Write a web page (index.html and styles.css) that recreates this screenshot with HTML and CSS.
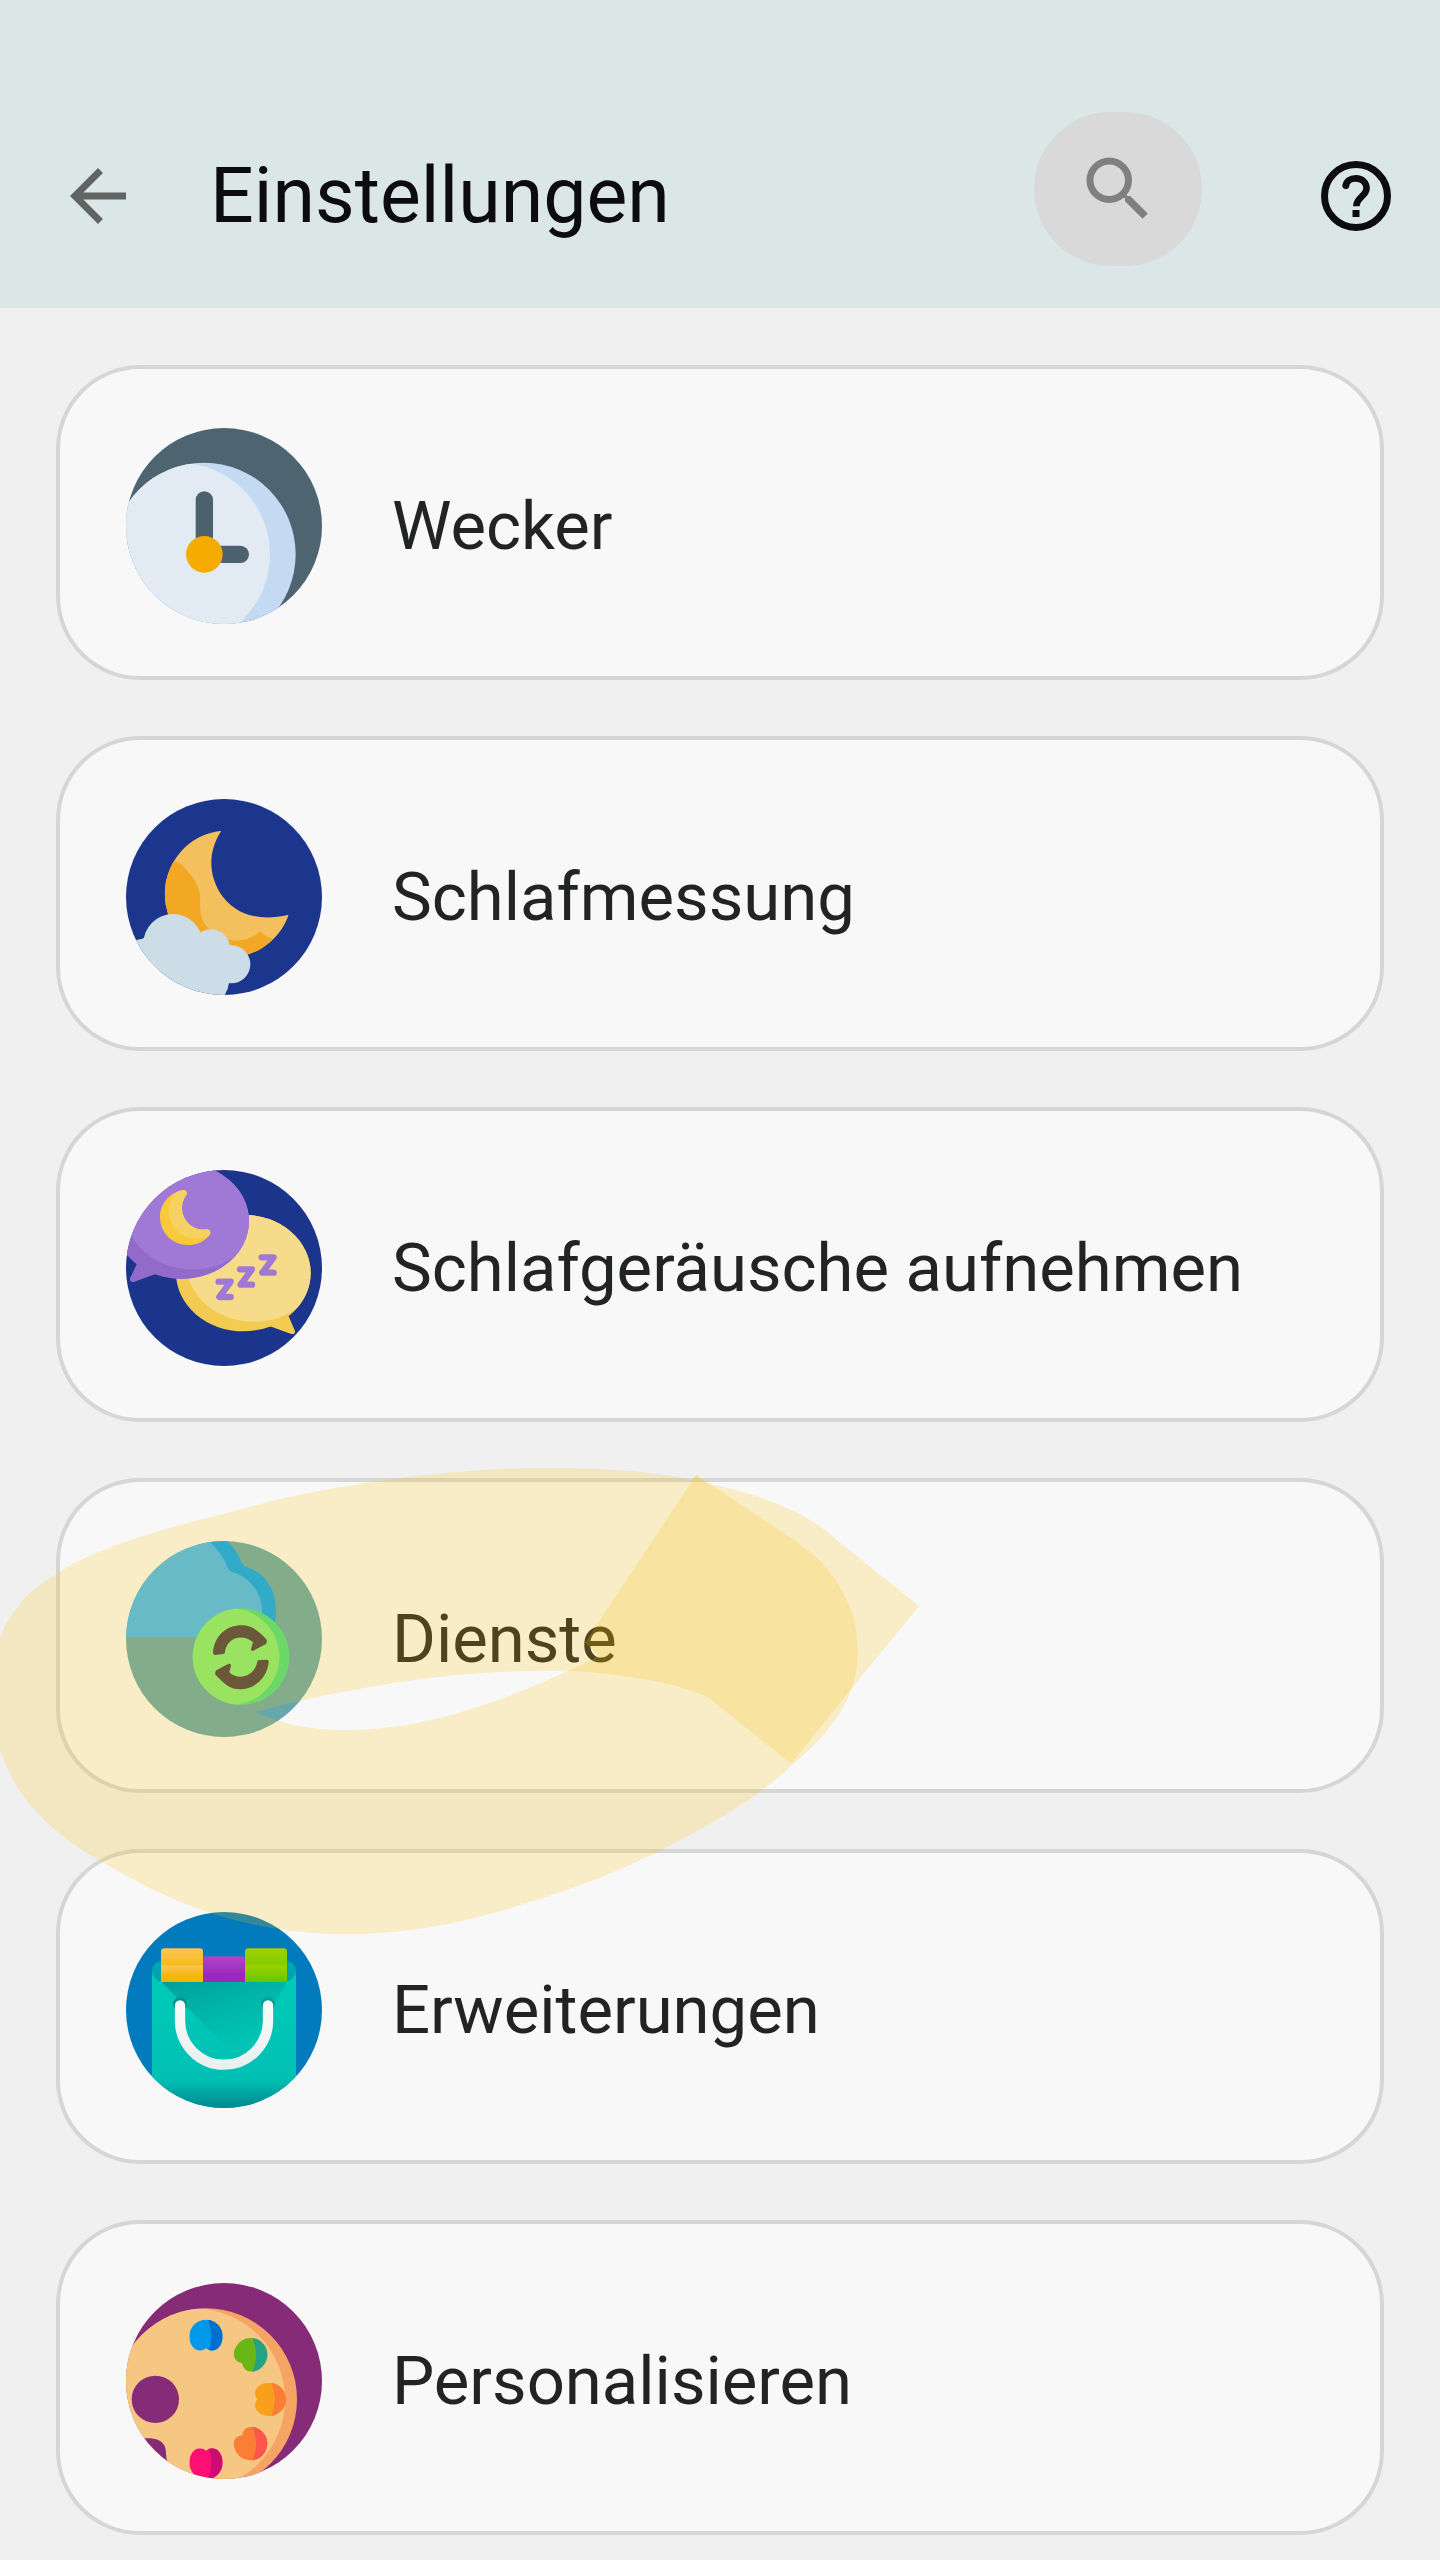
FILE: index.html
```
<!DOCTYPE html>
<html lang="de">
<head>
<meta charset="utf-8">
<meta name="viewport" content="width=device-width, initial-scale=1">
<title>Einstellungen</title>
<link rel="stylesheet" href="styles.css">
</head>
<body>
<header class="app-bar">
  <button class="icon-button" type="button" aria-label="Zurück">
    <svg class="glyph glyph-back" viewBox="0 0 24 24" aria-hidden="true"><path d="M20 11H7.83l5.59-5.59L12 4l-8 8 8 8 1.41-1.41L7.83 13H20v-2z"/></svg>
  </button>
  <h1 class="app-title">Einstellungen</h1>
  <button class="search-button" type="button" aria-label="Suchen">
    <svg class="glyph glyph-search" viewBox="0 0 24 24" aria-hidden="true"><path d="M15.5 14h-.79l-.28-.27A6.471 6.471 0 0 0 16 9.500 6.500 6.500 0 1 0 9.500 16c1.610 0 3.090-.59 4.230-1.570l.27.28v.79l5 4.990L20.490 19l-4.990-5zm-6 0C7.010 14 5 11.990 5 9.500S7.010 5 9.500 5 14 7.010 14 9.500 11.990 14 9.500 14z"/></svg>
  </button>
  <button class="icon-button" type="button" aria-label="Hilfe">
    <svg class="glyph glyph-help" viewBox="0 0 24 24" aria-hidden="true">
      <circle cx="12" cy="12" r="9" fill="none" stroke="currentColor" stroke-width="2"/>
      <path d="M9.100 9.300C9.100 7.800 10.400 6.950 12 6.950c1.700 0 3 1.150 3 2.850 0 2.300-2.900 2.500-2.900 5.100" fill="none" stroke="currentColor" stroke-width="1.900"/>
      <circle cx="9.100" cy="9.100" r=".95"/>
      <path d="M11 16h2v2h-2z"/>
    </svg>
  </button>
</header>

<main>
  <ul class="settings">
    <li class="setting">
      <a class="card" href="#wecker">
        <svg class="card-icon" viewBox="0 0 588 588" aria-hidden="true">
          <defs><clipPath id="clock-face"><circle cx="234" cy="379" r="275"/></clipPath></defs>
          <rect width="588" height="588" fill="#4e6471"/>
          <g clip-path="url(#clock-face)">
            <rect width="588" height="588" fill="#c4daf3"/>
            <circle cx="157" cy="379" r="275" fill="#e2ebf4"/>
          </g>
          <path d="M235 216V379" stroke="#4c626f" stroke-width="52" stroke-linecap="round"/>
          <path d="M235 379H343" stroke="#4c626f" stroke-width="52" stroke-linecap="round"/>
          <circle cx="235" cy="379" r="55" fill="#f5ab00"/>
        </svg>
        <span class="card-label">Wecker</span>
      </a>
    </li>

    <li class="setting">
      <a class="card" href="#schlafmessung">
        <svg class="card-icon" viewBox="48 56 588 588" aria-hidden="true">
          <defs><clipPath id="moon"><path d="M334 151A191 191 0 1 0 536 403C440 426 370 400 328 334C295 276 295 212 334 151Z"/></clipPath></defs>
          <rect x="48" y="56" width="588" height="588" fill="#1c368e"/>
          <g clip-path="url(#moon)">
            <rect x="140" y="140" width="410" height="410" fill="#f4c05e"/>
            <path d="M140 242H190Q205 243 220 258Q270 310 271 355C268 400 275 430 305 452L358 478Q412 488 450 453Q470 474 492 476L540 480V560H140Z" fill="#f3a825"/>
          </g>
          <g fill="#cddde7">
            <circle cx="189" cy="490" r="89"/>
            <circle cx="303" cy="504" r="57"/>
            <circle cx="364" cy="552" r="57"/>
            <path d="M40 481Q90 480 102 473L280 460L355 500L370 560L357 608Q354 632 340 650H40Z"/>
          </g>
        </svg>
        <span class="card-label">Schlafmessung</span>
      </a>
    </li>

    <li class="setting">
      <a class="card" href="#schlafgeraeusche">
        <svg class="card-icon" viewBox="48 59 588 588" aria-hidden="true">
          <defs>
            <clipPath id="bubble-yellow"><ellipse cx="400" cy="368" rx="202" ry="175"/></clipPath>
            <clipPath id="bubble-purple"><ellipse cx="215" cy="212" rx="202" ry="174"/></clipPath>
            <clipPath id="small-moon"><path d="M222 119Q232 122 231 130C205 165 215 205 245 227C262 238 275 239 292 237Q303 239 301 250C288 272 262 284 233 284A83 83 0 0 1 150 201C150 160 180 124 222 119Z"/></clipPath>
          </defs>
          <rect x="48" y="59" width="588" height="588" fill="#1b348c"/>
          <path d="M470 526L480 528L544 551Q556 553 555 542L536 498L500 500Z" fill="#f4cb51"/>
          <g clip-path="url(#bubble-yellow)">
            <rect x="190" y="190" width="420" height="360" fill="#f4cb51"/>
            <ellipse cx="432" cy="339" rx="203" ry="175" fill="#f6dc8a"/>
          </g>
          <path d="M40 300L80 342L60 384Q58 396 71 395L135 372L160 340L80 270Z" fill="#916aca"/>
          <g clip-path="url(#bubble-purple)">
            <rect x="0" y="30" width="430" height="370" fill="#916aca"/>
            <ellipse cx="248" cy="182" rx="203" ry="175" fill="#9f79d5"/>
          </g>
          <g clip-path="url(#small-moon)">
            <rect x="140" y="110" width="170" height="180" fill="#f8c93b"/>
            <circle cx="260" cy="182" r="84" fill="#f5d161"/>
          </g>
          <g fill="none" stroke="#9f79d5" stroke-width="19" stroke-linecap="round" stroke-linejoin="round">
            <path d="M455 321H491L457 367H491"/>
            <path d="M390 357H426L392 403H426"/>
            <path d="M326 394H362L328 440H362"/>
          </g>
        </svg>
        <span class="card-label">Schlafgeräusche aufnehmen</span>
      </a>
    </li>

    <li class="setting">
      <a class="card" href="#dienste">
        <svg class="card-icon" viewBox="48 62 588 588" aria-hidden="true">
          <defs><clipPath id="sync-disc"><circle cx="393" cy="409" r="145"/></clipPath></defs>
          <rect x="48" y="62" width="588" height="588" fill="#65a7ac"/>
          <path d="M250 62H352Q382 92 397 130Q400 137 412 141C470 160 511 220 494 310V351H400Z" fill="#01a6fa"/>
          <path d="M48 351V62H296Q335 95 354 143Q358 153 370 156C420 173 458 220 456 275V351Z" fill="#44baf7"/>
          <g clip-path="url(#sync-disc)">
            <rect x="240" y="260" width="305" height="300" fill="#48df80"/>
            <circle cx="363" cy="409" r="145" fill="#83ec78"/>
          </g>
          <g fill="#483c46">
            <path d="M316 404Q308 404 309 394C315 345 350 315 395 315C425 315 440 328 468 356Q473 362 468 371L430 391Q422 393 423 385L429 366C405 342 355 345 345 392Q346 400 340 401Z"/>
            <path d="M447 419L470 418Q477 418 476 426C473 470 435 507 390 507C360 507 345 492 317 464Q313 457 319 450L356 430Q363 429 363 436L358 456C380 480 432 472 441 427Q441 420 447 419Z"/>
          </g>
        </svg>
        <span class="card-label">Dienste</span>
      </a>
      <svg class="marker" viewBox="0 1460 940 480" aria-hidden="true">
        <g fill="#fac305" fill-opacity=".2">
          <path fill-rule="evenodd" d="M919 1606L832 1536C815 1520 775 1497 709 1484L696 1475L692 1480C644 1470 594 1468 545 1468C492 1468 440 1473 392 1479C340 1486 290 1496 245 1508C200 1520 158 1530 122 1543C98 1552 78 1560 61 1571C42 1583 26 1594 18 1607C8 1619 2 1630 0 1639V1750C9 1775 18 1792 37 1812C55 1832 78 1849 104 1863C134 1881 168 1898 202 1910C245 1926 297 1934 347 1934C408 1934 467 1922 520 1905C577 1888 628 1868 673 1844C720 1820 762 1794 791 1766C820 1742 841 1718 852 1688ZM255 1712C350 1687 460 1668 568 1671C490 1707 415 1731 345 1730C305 1730 280 1723 255 1712Z"/>
          <path d="M696 1475L796 1541C818 1557 832 1571 843 1593Q855 1614 856 1630L858 1653Q857 1673 852 1688L791 1764L709 1698C680 1683 620 1673 568 1671L592 1660L598 1655L585 1643L599 1621Z"/>
        </g>
      </svg>
    </li>

    <li class="setting">
      <a class="card" href="#erweiterungen">
        <svg class="card-icon" viewBox="48 65 588 588" aria-hidden="true">
          <defs>
            <linearGradient id="bag-front" x1="0" y1="0" x2="0" y2="1"><stop offset="0" stop-color="#00cbb7"/><stop offset=".78" stop-color="#00c0b4"/><stop offset="1" stop-color="#00838d"/></linearGradient>
            <linearGradient id="bag-shadow" x1="0" y1="0" x2=".6" y2="1"><stop offset="0" stop-color="#009f99"/><stop offset="1" stop-color="#00a59e" stop-opacity="0"/></linearGradient>
            <linearGradient id="box-orange" x1="0" y1="0" x2="0" y2="1"><stop offset="0" stop-color="#fac558"/><stop offset=".7" stop-color="#f7b500"/></linearGradient>
            <linearGradient id="box-purple" x1="0" y1="0" x2="0" y2="1"><stop offset="0" stop-color="#ae45cb"/><stop offset="1" stop-color="#9322b3"/></linearGradient>
            <linearGradient id="box-green" x1="0" y1="0" x2="0" y2="1"><stop offset="0" stop-color="#a2d000"/><stop offset="1" stop-color="#62c800"/></linearGradient>
            <linearGradient id="handle" x1="0" y1="0" x2="0" y2="1"><stop offset="0" stop-color="#fafafa"/><stop offset="1" stop-color="#e9f0f0"/></linearGradient>
          </defs>
          <rect x="48" y="65" width="588" height="588" fill="#027abe"/>
          <rect x="126" y="211" width="432" height="110" rx="30" fill="#00a4b0"/>
          <path d="M126 240A35 35 0 0 0 161 275H523A35 35 0 0 0 558 240V660H126Z" fill="url(#bag-front)"/>
          <path d="M154 275H530L440 440L350 470Z" fill="url(#bag-shadow)"/>
          <path d="M153 275V184Q153 174 163 174H269Q279 174 279 184V275Z" fill="url(#box-orange)"/>
          <rect x="153" y="225" width="126" height="50" fill="url(#box-orange)"/>
          <path d="M279 275V208Q279 198 289 198H395Q405 198 405 208V275Z" fill="url(#box-purple)"/>
          <rect x="279" y="249" width="126" height="26" fill="#9b28ba"/>
          <path d="M405 275V184Q405 174 415 174H521Q531 174 531 184V275Z" fill="url(#box-green)"/>
          <rect x="405" y="225" width="126" height="50" fill="url(#box-green)"/>
          <circle cx="210" cy="341" r="21" fill="#00928f"/>
          <circle cx="474" cy="341" r="21" fill="#009f9a"/>
          <path d="M210 345V391A132 132 0 0 0 474 391V345" fill="none" stroke="url(#handle)" stroke-width="31" stroke-linecap="round"/>
        </svg>
        <span class="card-label">Erweiterungen</span>
      </a>
    </li>

    <li class="setting">
      <a class="card" href="#personalisieren">
        <svg class="card-icon" viewBox="48 68 588 588" aria-hidden="true">
          <defs>
            <clipPath id="palette"><circle cx="288" cy="417" r="273"/></clipPath>
            <path id="dab" d="M0-50A50 50 0 0 1 50 0C50 25 35 43 18 43Q8 43 0 36Q-8 43-18 43C-35 43-50 25-50 0A50 50 0 0 1 0-50Z"/>
            <clipPath id="dab-down"><use href="#dab"/></clipPath>
            <clipPath id="dab-down-left"><use href="#dab" transform="rotate(45)"/></clipPath>
            <clipPath id="dab-left"><use href="#dab" transform="rotate(90)"/></clipPath>
            <clipPath id="dab-up-left"><use href="#dab" transform="rotate(135)"/></clipPath>
            <clipPath id="dab-up"><use href="#dab" transform="rotate(180)"/></clipPath>
            <path id="dab-shade" d="M2-60Q30 0 2 60H60V-60Z"/>
          </defs>
          <rect x="48" y="68" width="588" height="588" fill="#862b78"/>
          <g clip-path="url(#palette)">
            <rect x="15" y="140" width="550" height="550" fill="#f6a464"/>
            <circle cx="252" cy="417" r="273" fill="#f6c683"/>
          </g>
          <circle cx="136" cy="417" r="71" fill="#862b78"/>
          <path d="M40 534H120Q168 536 168 580Q168 596 173 604L175 660H40Z" fill="#862b78"/>
          <g transform="translate(288 228)" clip-path="url(#dab-down)"><rect x="-60" y="-60" width="120" height="120" fill="#0298ea"/><use href="#dab-shade" fill="#006fce"/></g>
          <g transform="translate(422 283)" clip-path="url(#dab-down-left)"><rect x="-60" y="-60" width="120" height="120" fill="#69b616"/><use href="#dab-shade" fill="#25a184"/></g>
          <g transform="translate(478 417)" clip-path="url(#dab-left)"><rect x="-60" y="-60" width="120" height="120" fill="#f8a01b"/><use href="#dab-shade" fill="#fb7d36"/></g>
          <g transform="translate(422 550)" clip-path="url(#dab-up-left)"><rect x="-60" y="-60" width="120" height="120" fill="#fb7d36"/><use href="#dab-shade" fill="#fd564a"/></g>
          <g transform="translate(288 607)" clip-path="url(#dab-up)"><rect x="-60" y="-60" width="120" height="120" fill="#fd0f76"/><use href="#dab-shade" fill="#ce0a73"/></g>
        </svg>
        <span class="card-label">Personalisieren</span>
      </a>
    </li>
  </ul>
</main>
</body>
</html>
```
FILE: styles.css
```
* {
  box-sizing: border-box;
}

body {
  margin: 0;
  background: #f0f0f0;
  color: #222423;
  font-family: Roboto, "Noto Sans", sans-serif;
  overflow-x: hidden;
}

.app-bar {
  display: flex;
  align-items: center;
  padding: 112px 42px 28px 56px;
  background: #dae7e6;
}

.app-title {
  flex: 1;
  margin: 0 0 0 70px;
  color: #0c0c0f;
  font-size: 77px;
  font-weight: 400;
  line-height: 168px;
}

.icon-button,
.search-button {
  display: flex;
  align-items: center;
  justify-content: center;
  padding: 0;
  border: 0;
  background: none;
  cursor: pointer;
}

.search-button {
  align-self: flex-start;
  width: 168px;
  height: 154px;
  margin-right: 112px;
  border-radius: 77px;
  background: #d8d9d8;
}

.glyph {
  display: block;
  width: 84px;
  height: 84px;
  fill: currentColor;
}

.glyph-back {
  color: #606564;
}

.glyph-search {
  color: #7f8081;
}

.glyph-help {
  color: #0c0c0c;
}

.settings {
  display: flex;
  flex-direction: column;
  gap: 56px;
  margin: 0;
  padding: 57px 56px 25px;
  list-style: none;
}

.setting {
  position: relative;
}

.card {
  display: flex;
  align-items: center;
  gap: 70px;
  padding: 59px 66px 52px;
  border: 4px solid #d5d7d7;
  border-radius: 84px;
  background: #f8f8f8;
  color: inherit;
  text-decoration: none;
}

.card-icon {
  flex: none;
  width: 196px;
  height: 196px;
  border-radius: 50%;
}

.card-label {
  font-size: 67px;
  line-height: 84px;
}

/* Highlighter stroke drawn over the row */
.marker {
  position: absolute;
  z-index: 1;
  top: -18px;
  left: -56px;
  width: 940px;
  height: 480px;
  pointer-events: none;
}
```
